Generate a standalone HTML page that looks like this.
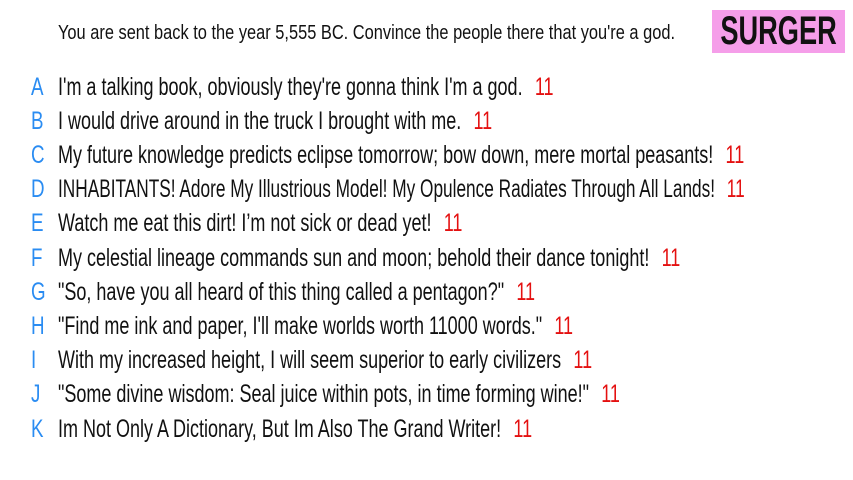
<!DOCTYPE html>
<html><head><meta charset="utf-8"><style>
html,body{margin:0;padding:0;background:#fff;width:853px;height:480px;overflow:hidden}
body{font-family:"Liberation Sans Narrow","Liberation Sans",sans-serif;color:#111;position:relative}
.hdr{position:absolute;left:58px;top:22px;font-size:20px;white-space:nowrap;transform-origin:left top;transform:scaleX(0.82)}
.logo{position:absolute;left:712px;top:10px;width:133px;height:43px;background:#f59ee9;color:#111;font-size:40px;line-height:43px;text-align:center;font-weight:bold;overflow:hidden;white-space:nowrap}
.logo span{display:inline-block;transform:scaleX(0.68);margin:0 -40px}
.row{position:absolute;left:0;height:30px;white-space:nowrap;font-size:25px;line-height:30px}
.l{position:absolute;left:31px;color:#2a8cf2;transform-origin:left top;transform:scaleX(0.75)}
.t{position:absolute;left:58px;transform-origin:left top;transform:scaleX(0.72)}
.n{color:#e41010;margin-left:17px}
</style></head><body>
<div class="hdr">You are sent back to the year 5,555 BC. Convince the people there that you're a god.</div>
<div class="logo"><span>SURGER</span></div>
<div class="row" style="top:72px"><span class="l">A</span><span class="t">I'm a talking book, obviously they're gonna think I'm a god.<span class="n">11</span></span></div>
<div class="row" style="top:106px"><span class="l">B</span><span class="t">I would drive around in the truck I brought with me.<span class="n">11</span></span></div>
<div class="row" style="top:140px"><span class="l">C</span><span class="t">My future knowledge predicts eclipse tomorrow; bow down, mere mortal peasants!<span class="n">11</span></span></div>
<div class="row" style="top:174px"><span class="l">D</span><span class="t" style="transform:scaleX(0.69)">INHABITANTS! Adore My Illustrious Model! My Opulence Radiates Through All Lands!<span class="n">11</span></span></div>
<div class="row" style="top:208px"><span class="l">E</span><span class="t">Watch me eat this dirt! I’m not sick or dead yet!<span class="n">11</span></span></div>
<div class="row" style="top:243px"><span class="l">F</span><span class="t">My celestial lineage commands sun and moon; behold their dance tonight!<span class="n">11</span></span></div>
<div class="row" style="top:277px"><span class="l">G</span><span class="t">"So, have you all heard of this thing called a pentagon?"<span class="n">11</span></span></div>
<div class="row" style="top:311px"><span class="l">H</span><span class="t">"Find me ink and paper, I'll make worlds worth 11000 words."<span class="n">11</span></span></div>
<div class="row" style="top:345px"><span class="l">I</span><span class="t">With my increased height, I will seem superior to early civilizers<span class="n">11</span></span></div>
<div class="row" style="top:379px"><span class="l">J</span><span class="t">"Some divine wisdom: Seal juice within pots, in time forming wine!"<span class="n">11</span></span></div>
<div class="row" style="top:414px"><span class="l">K</span><span class="t">Im Not Only A Dictionary, But Im Also The Grand Writer!<span class="n">11</span></span></div>
</body></html>
